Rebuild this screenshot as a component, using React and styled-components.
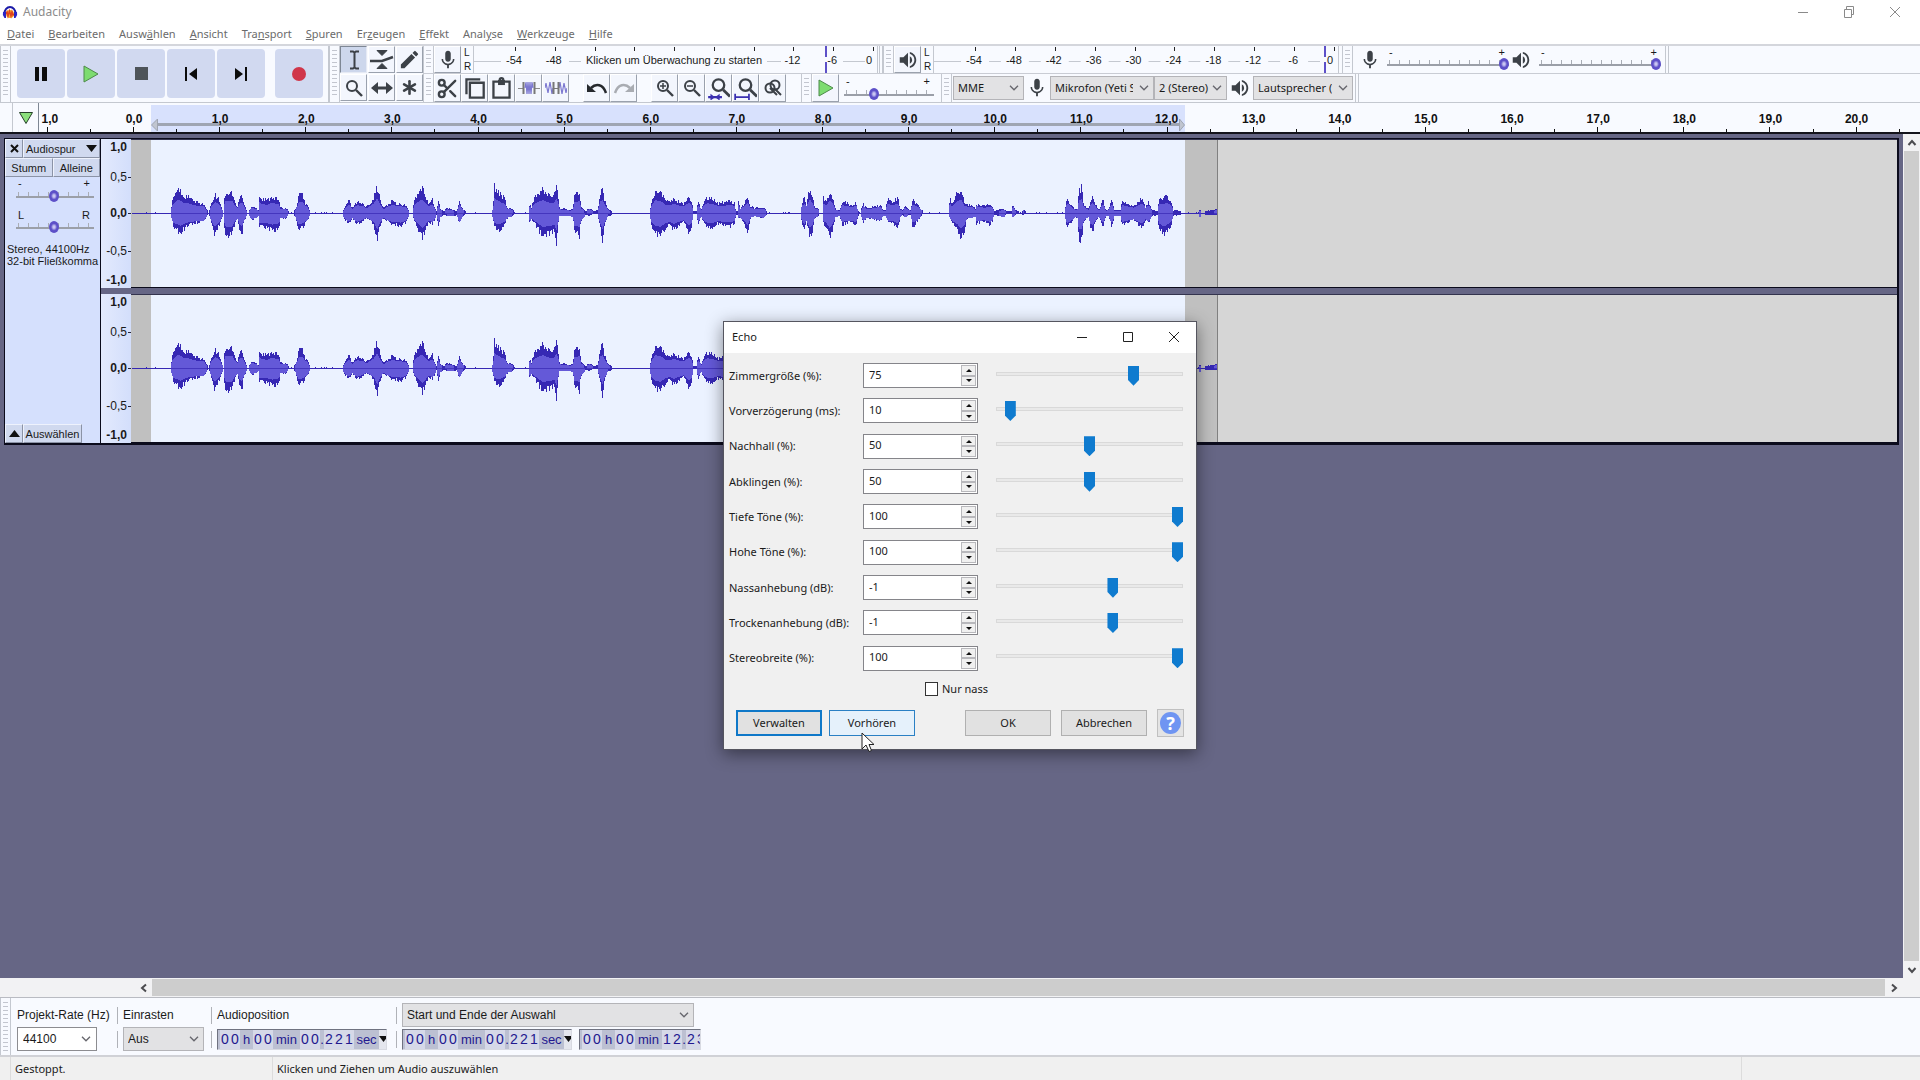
import { useState } from "react";
import styled, { createGlobalStyle, css } from "styled-components";
import { MdMic, MdVolumeUp, MdEdit } from "react-icons/md";
import { Scissors, Asterisk } from "lucide-react";

const GlobalStyle = createGlobalStyle`
  * { box-sizing: border-box; }
  body {
    margin: 0;
    overflow: hidden;
    background: #666685;
    color: #1a1a1a;
    font-family: "Noto Sans", "Segoe UI", sans-serif;
    font-size: 11px;
    line-height: 16px;
  }
  button, input, select {
    font: inherit;
    color: inherit;
    margin: 0;
    padding: 0;
    border: 0;
    border-radius: 0;
    background: none;
  }
  svg { display: block; flex-shrink: 0; }
`;

const arial = css`
  font-family: "Liberation Sans", Arial, sans-serif;
`;

const Window = styled.div`
  display: flex;
  flex-direction: column;
  height: 100vh;
  position: relative;
`;

/* ---------- title + menu ---------- */

const TitleBar = styled.header`
  display: flex;
  align-items: center;
  height: 24px;
  padding: 0 17px 0 2px;
  background: #fff;
  color: #8c8c8c;
`;

const AppTitle = styled.h1`
  flex: 1;
  margin: 0 0 0 5px;
  font-size: 12px;
  font-weight: 400;
`;

const WindowButtons = styled.div`
  display: flex;
  gap: 30px;
`;

const WindowButton = styled.button`
  display: flex;
  justify-content: center;
  width: 16px;
  color: #8a8a8a;
`;

const MenuBar = styled.nav`
  display: flex;
  gap: 14px;
  height: 20px;
  padding: 2px 7px;
  background: #fff;
  color: #6b6b6b;
`;

const MenuButton = styled.button`
  white-space: nowrap;
`;

/* ---------- toolbars ---------- */

const ToolDock = styled.div`
  display: flex;
  height: 59px;
  border-top: 2px solid #d4d6dc;
  border-bottom: 1px solid #c4c8d0;
  background: #f8faff;
`;

const ToolRows = styled.div`
  flex: 1;
  display: grid;
  grid-template-rows: 28px 1fr;
`;

const ToolRow = styled.div`
  display: flex;
  align-items: stretch;
  border-bottom: ${(p) => (p.$last ? "0" : "1px solid #c9ccd4")};
`;

const Grabber = styled.div`
  width: 11px;
  border-left: 1px solid #c4c8d0;
  border-right: 1px solid #c4c8d0;
  padding: 4px 2px;
  &::before {
    content: "";
    display: block;
    height: 100%;
    background: repeating-linear-gradient(#c3c6cf 0 1px, transparent 1px 4px);
  }
`;

const DockEnd = styled.div`
  width: 4px;
  border-left: 1px solid #c4c8d0;
  border-right: 1px solid #c4c8d0;
`;

const Transport = styled.div`
  display: flex;
  gap: 2px;
  padding: 3px 5px 4px 6px;
  border-right: 1px solid #c4c8d0;
`;

const TransportButton = styled.button`
  display: flex;
  align-items: center;
  justify-content: center;
  width: 48px;
  margin-left: ${(p) => (p.$apart ? 8 : 0)}px;
  border-radius: 4px;
  background: #d1d9f0;
`;

const ToolGrid = styled.div`
  display: grid;
  grid-template-columns: repeat(3, 27px);
  grid-template-rows: 27px 27px;
  gap: 1px;
`;

const ToolButton = styled.button`
  display: flex;
  align-items: center;
  justify-content: center;
  width: 27px;
  color: #3c4147;
  background: ${(p) => (p.$on ? "#cdd7ec" : "#f3f6fd")};
  border: 1px solid;
  border-color: ${(p) => (p.$on ? "#7e8794 #e6eaf4 #e6eaf4 #7e8794" : "#fff #9aa1ad #9aa1ad #fff")};
`;

const Spacer = styled.div`
  width: ${(p) => p.$width}px;
`;

const Channels = styled.div`
  ${arial}
  display: flex;
  flex-direction: column;
  justify-content: space-around;
  width: 12px;
  padding-left: 3px;
  font-size: 10px;
  line-height: 13px;
`;

const MeterFrame = styled.button`
  ${arial}
  width: ${(p) => p.$width}px;
  border-left: 1px solid #c4c8d0;
  font-size: 11px;
`;

const ToolIcon = styled.span`
  display: flex;
  align-items: center;
  justify-content: center;
  width: ${(p) => p.$width}px;
  color: #3c4147;
`;

const SliderBox = styled.label`
  ${arial}
  display: flex;
  flex-direction: column;
  width: ${(p) => p.$width}px;
  font-size: 11px;
  line-height: ${(p) => p.$line || 11}px;
`;

const SliderEnds = styled.span`
  display: flex;
  justify-content: space-between;
  padding: 0 4px 0 2px;
`;

const KnobRange = styled.input`
  appearance: none;
  width: 100%;
  height: 12px;
  background:
    linear-gradient(#9b9fa8, #9b9fa8) 0 6px / 100% 2px no-repeat,
    repeating-linear-gradient(90deg, #a9adb5 0 1px, transparent 1px 10px) 2px 2px / 100% 4px no-repeat;
  &::-webkit-slider-thumb {
    appearance: none;
    width: 10px;
    height: 12px;
    border-radius: 50%;
    background: radial-gradient(#c9c6f2 0 1px, #5d50c8 3px 5px);
  }
`;

const SelectWrap = styled.span`
  position: relative;
  display: flex;
  width: ${(p) => p.$width}px;
  height: ${(p) => p.$height || 24}px;
  margin: ${(p) => p.$margin || "0"};
  svg {
    position: absolute;
    right: 5px;
    top: calc(50% - 3px);
    pointer-events: none;
  }
`;

const Select = styled.select`
  ${(p) => p.$arial && arial}
  appearance: none;
  width: 100%;
  padding: 0 ${(p) => (p.$clip ? 20 : 4)}px 0 4px;
  border: 1px solid #b4b4b8;
  background: #e2e2e4;
  font-size: ${(p) => (p.$arial ? 12 : 11)}px;
`;

/* ---------- timeline ---------- */

const Timeline = styled.div`
  display: flex;
  height: 31px;
  border-bottom: 2px solid #14141c;
  background: #f8faff;
`;

const PinButton = styled.button`
  display: flex;
  align-items: center;
  justify-content: center;
  width: 27px;
  margin-left: 12px;
  border-left: 1px solid #c4c8d0;
  border-right: 1px solid #7e8794;
`;

const RulerBox = styled.div`
  ${arial}
  flex: 1;
  overflow: hidden;
  font-size: 12px;
  font-weight: 700;
`;

/* ---------- project area ---------- */

const Project = styled.main`
  flex: 1;
  min-height: 0;
  display: grid;
  grid-template-columns: 1fr 17px;
  grid-template-rows: 1fr 19px;
`;

const TrackArea = styled.section`
  padding: 4px 4px 0 4px;
  overflow: hidden;
  background: #666685;
`;

const Track = styled.article`
  display: flex;
  border: 1px solid #0b0b1c;
  border-width: 1px 2px 2px 1px;
  height: 307px;
`;

const TrackPanel = styled.div`
  ${arial}
  display: flex;
  flex-direction: column;
  width: 96px;
  border-right: 1px solid #0b0b1c;
  background: #d5e0fd;
  font-size: 11px;
  line-height: 12px;
`;

const PanelRow = styled.div`
  display: flex;
  height: 19px;
`;

const PanelButton = styled.button`
  display: flex;
  align-items: center;
  justify-content: ${(p) => (p.$spread ? "space-between" : "center")};
  width: ${(p) => (p.$width ? p.$width + "px" : "auto")};
  flex: ${(p) => (p.$width ? "none" : 1)};
  padding: 0 2px;
  overflow: hidden;
  background: #d0d9ef;
  border: 1px solid;
  border-color: #eef2fd #8b93a6 #8b93a6 #eef2fd;
`;

const PanelSliders = styled.div`
  display: flex;
  flex-direction: column;
  gap: 8px;
  padding: 0 5px 0 11px;
`;

const FormatInfo = styled.p`
  flex: 1;
  margin: 10px 0 0 2px;
  font-size: 11px;
  line-height: 12px;
  white-space: nowrap;
`;

const Lanes = styled.div`
  flex: 1;
  min-width: 0;
  display: grid;
  grid-template-rows: 149px 149px;
  gap: 6px;
`;

const Lane = styled.div`
  display: flex;
  min-width: 0;
`;

const Scale = styled.ul`
  ${arial}
  display: grid;
  grid-template-rows: 16px 44px 28px 48px 9px;
  width: 30px;
  margin: 0;
  padding: 0;
  list-style: none;
  background: linear-gradient(90deg, #e3eafd, #d3defb);
`;

const ScaleMark = styled.li`
  display: flex;
  align-items: center;
  justify-content: flex-end;
  padding-right: ${(p) => (p.$tick ? 0 : 4)}px;
  font-size: 12px;
  font-weight: ${(p) => (p.$bold ? 700 : 400)};
  &::after {
    content: "";
    display: ${(p) => (p.$tick ? "block" : "none")};
    width: 3px;
    height: 1px;
    margin-left: 1px;
    background: #26263a;
  }
`;

const Wave = styled.div`
  flex: 1;
  min-width: 0;
  overflow: hidden;
  border-top: 1px solid #34344e;
  border-bottom: 1px solid #0b0b1c;
  background: #d6d6d6;
`;

const Scroll = styled.div`
  display: flex;
  flex-direction: ${(p) => (p.$vertical ? "column" : "row")};
  padding: ${(p) => (p.$vertical ? "0 1px" : "1px 0 1px 135px")};
  background: #f2f2f4;
`;

const ScrollButton = styled.button`
  display: flex;
  align-items: center;
  justify-content: center;
  width: ${(p) => p.$width || 15}px;
  height: 17px;
  color: #4c4c50;
`;

const ScrollThumb = styled.div`
  flex: 1;
  background: #cdcdcd;
`;

const Corner = styled.div`
  background: #f2f2f4;
`;

/* ---------- bottom bars ---------- */

const SelectionBar = styled.div`
  ${arial}
  display: flex;
  height: 58px;
  border-top: 1px solid #b9bbc2;
  background: #f8faff;
  font-size: 12px;
`;

const SelectionGrid = styled.div`
  display: grid;
  grid-template-columns: 94px 88px 179px auto;
  grid-template-rows: 24px 24px;
  column-gap: 6px;
  padding: 5px 0 0 6px;
`;

const SelectionCell = styled.div`
  display: flex;
  align-items: center;
  gap: 7px;
  white-space: nowrap;
`;

const Divided = styled(SelectionCell)`
  padding-left: 6px;
  background: linear-gradient(#b0b2b8, #b0b2b8) 0 4px / 1px 17px no-repeat;
`;

const ComboWrap = styled(SelectWrap)`
  border: 1px solid #8c8c90;
  background: #fff;
`;

const ComboInput = styled.input`
  width: 100%;
  padding-left: 5px;
  background: none;
`;

const TimeField = styled.div`
  display: flex;
  width: ${(p) => p.$width}px;
  height: 21px;
  padding-left: 2px;
  overflow: hidden;
  border: 1px solid;
  border-color: #6f7280 #d8dae2 #d8dae2 #6f7280;
  background: #bcc0d2;
  color: #23188f;
  font-size: 14px;
  line-height: 19px;
`;

const Digit = styled.span`
  flex: none;
  width: 10px;
  text-align: center;
  background: #d6d9e8;
`;

const Unit = styled.span`
  flex: none;
  width: ${(p) => p.$width}px;
  text-align: center;
  font-size: 13px;
`;

const TimeMenu = styled.button`
  margin-left: auto;
  width: 9px;
  background: #e4e6ee;
  color: #111;
`;

const StatusBar = styled.footer`
  display: flex;
  height: 25px;
  border-top: 2px solid #d0d1d6;
  padding-left: 10px;
  background: #f0f0f0;
  line-height: 23px;
`;

const StatusCell = styled.span`
  width: ${(p) => (p.$width ? p.$width + "px" : "auto")};
  flex: ${(p) => (p.$width ? "none" : 1)};
  padding-left: 4px;
  border-left: 1px solid #dcdcdc;
`;

/* ---------- echo dialog ---------- */

const Dialog = styled.section`
  position: absolute;
  top: 321px;
  left: calc(50% - 237px);
  width: 474px;
  border: 1px solid #55555f;
  background: #f0f0f0;
  box-shadow: 0 4px 16px rgba(0, 0, 0, 0.45);
`;

const DialogTitle = styled.header`
  display: flex;
  align-items: center;
  height: 31px;
  padding: 0 14px 2px 8px;
  background: #fff;
`;

const DialogName = styled.h2`
  flex: 1;
  margin: 0;
  font-size: 11px;
  font-weight: 400;
`;

const DialogButtons = styled(WindowButtons)`
  button { color: #222; }
`;

const Params = styled.div`
  display: grid;
  grid-template-rows: repeat(9, 1fr);
  height: 318px;
  margin-top: 5px;
  padding: 0 12px 0 5px;
`;

const ParamRow = styled.div`
  display: grid;
  grid-template-columns: 134px 115px 1fr;
  align-items: center;
`;

const SpinBox = styled.div`
  display: flex;
  height: 25px;
  padding: 1px;
  border: 1px solid #85858a;
  background: #fff;
`;

const SpinInput = styled.input`
  flex: 1;
  min-width: 0;
  padding: 0 0 2px 4px;
  outline: 0;
`;

const SpinButtons = styled.div`
  display: grid;
  width: 15px;
  grid-template-rows: 1fr 1fr;
`;

const SpinButton = styled.button`
  display: flex;
  align-items: center;
  justify-content: center;
  border: 1px solid #b8b8bc;
  background: #f0f0f0;
`;

const ParamSlider = styled.input`
  appearance: none;
  width: 187px;
  height: 20px;
  margin-left: 18px;
  background:
    linear-gradient(#e9e9e9, #e9e9e9) 1px 7px / 185px 2px no-repeat,
    linear-gradient(#d9d9d9, #d9d9d9) 0 6px / 100% 4px no-repeat;
  &::-webkit-slider-thumb {
    appearance: none;
    width: 11px;
    height: 20px;
    background: #0f7bcf;
    clip-path: polygon(0 0, 100% 0, 100% 72%, 50% 100%, 0 72%);
  }
`;

const CheckLabel = styled.label`
  display: flex;
  align-items: center;
  gap: 4px;
  width: max-content;
  margin: 5px 0 0 201px;
`;

const CheckBox = styled.input`
  appearance: none;
  width: 13px;
  height: 14px;
  border: 1px solid #333;
  background: #fff;
`;

const DialogActions = styled.div`
  display: flex;
  align-items: center;
  gap: 7px;
  padding: 12px;
`;

const Push = styled.button`
  width: 86px;
  height: 26px;
  margin-left: ${(p) => p.$left || 0}px;
  margin-right: ${(p) => p.$right || 0}px;
  border: ${(p) => (p.$focus ? "2px solid #0f78c8" : p.$hover ? "1px solid #2a80c4" : "1px solid #b0b0b0")};
  background: ${(p) => (p.$hover ? "#e5f1fb" : "#e1e1e1")};
`;

const HelpButton = styled.button`
  display: flex;
  align-items: center;
  justify-content: center;
  width: 27px;
  height: 28px;
  margin-left: 3px;
  border: 1px solid #c0c0c0;
  background: #e4e4e4;
`;

const HelpMark = styled.span`
  width: 21px;
  height: 22px;
  border-radius: 50%;
  background: #6f95f2;
  color: #fff;
  font-size: 18px;
  font-weight: 700;
  line-height: 22px;
`;

const Cursor = styled.svg`
  position: absolute;
  left: 137px;
  top: 410px;
`;

/* ---------- data ---------- */

// [before, access key, after]
const menus = [
  ["", "D", "atei"], ["", "B", "earbeiten"], ["Ausw", "ä", "hlen"], ["", "A", "nsicht"],
  ["Tra", "n", "sport"], ["", "S", "puren"], ["Er", "z", "eugen"], ["", "E", "ffekt"],
  ["Anal", "y", "se"], ["", "W", "erkzeuge"], ["", "H", "ilfe"],
];

const params = [
  { id: "room", label: "Zimmergröße (%):", value: 75, min: 0, max: 100 },
  { id: "predelay", label: "Vorverzögerung (ms):", value: 10, min: 0, max: 200 },
  { id: "reverb", label: "Nachhall (%):", value: 50, min: 0, max: 100 },
  { id: "damping", label: "Abklingen (%):", value: 50, min: 0, max: 100 },
  { id: "low", label: "Tiefe Töne (%):", value: 100, min: 0, max: 100 },
  { id: "high", label: "Hohe Töne (%):", value: 100, min: 0, max: 100 },
  { id: "wet", label: "Nassanhebung (dB):", value: -1, min: -20, max: 10 },
  { id: "dry", label: "Trockenanhebung (dB):", value: -1, min: -20, max: 10 },
  { id: "width", label: "Stereobreite (%):", value: 100, min: 0, max: 100 },
];

// peak envelope of the clip: third-pixels from the block start, peak above, peak below
const envelope = [
  { start: 0, points: [
    [395,1,1],[510,1,1],[515,11,8],[520,16,15],[532,24,18],[540,22,21],[550,16,16],[565,16,13],[580,12,11],
    [595,10,9],[610,9,9],[618,4,4],[625,1,1],[632,8,8],[640,16,21],[645,18,21],[655,14,14],[665,4,4],
    [670,1,1],[673,20,21],[680,21,23],[697,20,22],[700,14,14],[707,8,8],[712,6,6],[718,17,19],[725,18,21],
    [730,10,10],[738,3,3],[742,1,1],[755,7,7],[768,5,5],[774,3,3],[776,19,14],[782,14,14],[800,13,15],
    [815,17,18],[830,14,17],[836,13,14],[840,5,5],[857,5,5],[865,2,1],[878,1,1],[885,4,4],[892,12,14],
    [895,19,18],[907,18,15],[915,10,10],[922,7,7],[930,1,1],[1027,1,1],[1030,4,5],[1046,13,11],[1055,5,5],
    [1070,12,12],[1085,10,8],[1098,6,5],[1110,11,8],[1120,16,12],[1130,27,29],[1138,15,15],[1148,5,5],
    [1165,9,9],[1175,13,12],[1190,9,12],[1199,9,13],
  ] },
  { start: 400, points: [
    [0,9,14],[15,8,10],[28,1,1],[36,1,1],[42,13,8],[55,20,18],[65,25,26],[75,17,18],[85,10,8],[95,14,12],
    [105,4,5],[108,2,2],[114,12,12],[120,4,4],[130,2,2],[140,5,3],[160,3,3],[170,2,2],[176,12,12],[187,4,3],
    [200,1,1],[225,1,1],[272,1,1],[278,5,6],[282,27,14],[292,22,18],[305,17,15],[314,14,11],[320,5,5],
    [330,5,4],[345,1,1],[385,1,1],[388,11,12],[393,5,6],[400,14,9],[415,20,17],[428,23,24],[440,19,21],
    [450,17,22],[460,17,18],[464,20,20],[467,28,34],[472,20,14],[477,5,3],[510,3,3],[518,5,4],[522,18,20],
    [537,21,23],[542,6,8],[555,2,2],[568,5,3],[580,2,1],[592,3,2],[600,20,16],[606,24,27],[612,14,14],
    [622,4,3],[635,2,2],[670,1,1],[748,1,1],[752,10,12],[765,23,20],[780,21,23],[795,13,15],[808,12,12],
    [820,15,17],[835,11,12],[850,9,8],[858,14,14],[866,17,20],[874,12,13],[878,2,2],[888,2,1],[893,11,10],
    [903,4,4],[908,10,8],[920,16,14],[935,15,15],[955,10,10],[975,11,13],[990,13,13],[1003,9,10],[1006,2,2],
    [1012,2,2],[1015,16,6],[1018,4,4],[1030,9,9],[1042,17,19],[1050,7,5],[1062,5,3],[1088,6,5],[1100,2,2],
    [1160,1,1],[1200,1,1],[1204,10,9],[1212,15,17],[1218,9,9],[1228,25,24],[1236,17,19],[1243,5,5],
    [1253,5,3],[1258,1,1],[1266,1,1],[1268,15,9],[1278,12,15],[1288,22,26],[1298,14,14],[1305,4,4],
    [1318,3,3],[1325,12,12],[1340,10,10],[1355,7,9],[1366,11,13],[1373,3,3],[1380,1,1],[1388,9,9],
    [1400,5,5],[1439,8,8],
  ] },
  { start: 860, points: [
    [62,8,8],[68,3,3],[75,3,3],[82,16,9],[95,11,9],[112,15,15],[120,4,4],[127,3,2],[133,7,4],[150,3,2],
    [157,14,14],[170,9,9],[187,2,1],[200,1,1],[265,1,1],[268,17,5],[275,8,9],[290,20,17],[302,24,26],
    [312,11,18],[320,8,5],[335,8,5],[345,4,4],[348,9,11],[370,7,8],[390,8,12],[397,7,7],[400,2,2],
    [430,4,4],[440,2,1],[454,2,1],[457,9,5],[465,3,2],[484,1,1],[487,4,3],[495,2,1],[550,1,1],[612,1,1],
    [615,7,6],[620,16,15],[632,8,9],[645,4,4],[651,5,5],[655,22,28],[664,26,27],[670,8,8],[685,4,4],
    [690,12,16],[697,17,20],[705,9,9],[715,3,3],[728,13,14],[736,3,3],[745,4,3],[754,14,14],[762,3,3],
    [780,3,3],[785,12,12],[800,9,9],[820,7,7],[845,15,15],[855,6,7],[865,11,10],[875,3,3],[892,2,2],
    [895,15,15],[910,15,22],[920,17,18],[932,12,12],[938,3,3],[960,2,2],[1010,1,1],[1016,1,1],[1018,5,6],
    [1022,1,1],[1035,2,2],[1060,3,2],[1072,4,2],
  ] },
];

const peaks = envelope.flatMap(({ start, points }) =>
  points.map(([x, up, down]) => [start + x / 3 - 131, up, down])
);

function noise(n) {
  const s = Math.sin(n * 127.1) * 43758.5453;
  return s - Math.floor(s);
}

function rms(v) {
  return v < 3 ? 0 : v < 10 ? v * 0.75 : 7 + (v - 10) * 0.45;
}

// one vertical bar per pixel column
function buildWave() {
  let outer = "";
  let inner = "";
  let i = 0;
  for (let x = 1; x < 1086; x++) {
    while (i < peaks.length - 2 && peaks[i + 1][0] < x) i++;
    const [x0, u0, d0] = peaks[i];
    const [x1, u1, d1] = peaks[i + 1];
    const t = Math.min(1, Math.max(0, (x - x0) / (x1 - x0)));
    const up = u0 + (u1 - u0) * t;
    const down = d0 + (d1 - d0) * t;
    const a = up < 2 ? (noise(x) > 0.9 ? 1 : 0) : up * (0.82 + noise(x) * 0.32);
    const b = down < 2 ? 1 : down * (0.82 + noise(x + 500) * 0.32);
    outer += `M${x} ${74 - Math.round(a)}V${75 + Math.round(b - 1)}`;
    const ra = Math.min(rms(up), a);
    const rb = Math.min(rms(down), b);
    if (ra + rb > 1) inner += `M${x} ${74 - Math.round(ra)}V${75 + Math.round(rb)}`;
  }
  return { outer, inner };
}

const wave = buildWave();

/* ---------- small parts ---------- */

const Chevron = () => (
  <svg width="10" height="6" viewBox="0 0 10 6" fill="none" stroke="#66666c" strokeWidth="1.3">
    <path d="M1 .8 5 4.8 9 .8" />
  </svg>
);

const Arrow = ({ d }) => (
  <svg width="10" height="10" viewBox="0 0 10 10" fill="none" stroke="currentColor" strokeWidth="2">
    <path d={d} />
  </svg>
);

const Minimize = () => (
  <svg width="12" height="12" stroke="currentColor"><path d="M1 6.5h10" /></svg>
);

const Close = () => (
  <svg width="12" height="12" stroke="currentColor"><path d="M1 1 11 11M11 1 1 11" /></svg>
);

const Tri = ({ up, w = 6, h = 3 }) => (
  <svg width={w} height={h} viewBox="0 0 6 3" preserveAspectRatio="none" fill="#111">
    <path d={up ? "M0 3h6L3 0z" : "M0 0h6L3 3z"} />
  </svg>
);

const Icon = ({ size = 20, children }) => (
  <svg width={size} height={size} viewBox="0 0 20 20" fill="none" stroke="currentColor" strokeWidth="2">
    {children}
  </svg>
);

const Lens = ({ x = 8, y = 8 }) => (
  <g>
    <circle cx={x} cy={y} r="5" />
    <path d={`M${x + 4} ${y + 4}l6 6`} strokeWidth="2.4" />
  </g>
);

function TickSlider({ name, width, left = "-", right = "+", value, line }) {
  const [v, setV] = useState(value);
  return (
    <SliderBox $width={width} $line={line}>
      <SliderEnds><span>{left}</span><span>{right}</span></SliderEnds>
      <KnobRange type="range" aria-label={name} value={v} onChange={(e) => setV(e.target.value)} />
    </SliderBox>
  );
}

function DropDown({ name, width, height, margin, options, clip, arialText }) {
  return (
    <SelectWrap $width={width} $height={height} $margin={margin}>
      <Select aria-label={name} $clip={clip} $arial={arialText}>
        {options.map((o) => <option key={o}>{o}</option>)}
      </Select>
      <Chevron />
    </SelectWrap>
  );
}

function Meter({ name, width, first, labels, message, end, peak }) {
  const step = (end - first) / 9;
  return (
    <MeterFrame $width={width} aria-label={name}>
      <svg width={width - 2} height="27" fontSize="11">
        <path d={`M0 15.5H${first - 14}`} stroke="#c4c8d0" />
        {Array.from({ length: 10 }, (_, i) => (
          <path key={i} d={`M${Math.round(first + i * step) + 0.5} 1v4`} stroke="#222" />
        ))}
        {!message && <path d={`M${first + 14} 15.5H${end - 4}`} stroke="#c4c8d0" strokeDasharray={`${step - 28} 28`} />}
        {message && <path d={`M${first + 54} 15.5H${first + 66}M${first + 252} 15.5H${first + 266}M${end - 30} 15.5H${end - 8}`} stroke="#c4c8d0" />}
        {labels.map((l, i) => l !== null && (
          <text key={i} x={i === 9 ? end - 4 : first + i * step - 1} y="18" textAnchor="middle" fill="#1a1a1a">{l}</text>
        ))}
        {message && <text x={first + 159} y="18" textAnchor="middle" fill="#1a1a1a">{message}</text>}
        <path d={`M${peak} 0v11M${peak} 16v11`} stroke="#5d50c8" strokeWidth="2" />
        <path d={`M${end + 4.5} 0v27`} stroke="#c4c8d0" />
      </svg>
    </MeterFrame>
  );
}

function Time({ hours, minutes, seconds, width, menu }) {
  const digits = (s) => s.split("").map((c, i) => <Digit key={i}>{c}</Digit>);
  const [whole, part] = seconds.split(".");
  return (
    <TimeField $width={width}>
      {digits(hours)}<Unit $width={13}>h</Unit>
      {digits(minutes)}<Unit $width={27}>min</Unit>
      {digits(whole)}<Unit $width={4}>.</Unit>
      {digits(part)}
      {menu && <Unit $width={25}>sec</Unit>}
      {menu && <TimeMenu aria-label="Format"><Tri w={9} h={6} /></TimeMenu>}
    </TimeField>
  );
}

function Ruler() {
  const marks = Array.from({ length: 44 }, (_, i) => i / 2 - 1);
  const toX = (t) => 94 + t * 86.13;
  return (
    <svg width="1882" height="29">
      <rect x="112" y="2" width="1034" height="27" fill="#d8e1fd" />
      <path d="M118 21.500H1140" stroke="#9fa5b2" strokeWidth="3" />
      <path d="M118.500 16v12l-6-6zM1140.500 16v12l5-6z" fill="#c0c5d0" stroke="#9fa5b2" />
      {marks.map((t) => (
        <path key={t} d={`M${Math.round(toX(t)) + 0.5} ${Number.isInteger(t) ? 24 : 26}V29`} stroke="#111" />
      ))}
      {marks.filter(Number.isInteger).map((t) => (
        <text key={t} x={toX(t) + (t < 0 ? 3 : t === 12 ? 0 : 1)} y="20" textAnchor="middle" fill="#111">
          {`${Math.abs(t)},0`}
        </text>
      ))}
    </svg>
  );
}

function Channel() {
  return (
    <Lane>
      <Scale>
        <ScaleMark $bold>1,0</ScaleMark>
        <ScaleMark $tick>0,5</ScaleMark>
        <ScaleMark $tick $bold>0,0</ScaleMark>
        <ScaleMark $tick>-0,5</ScaleMark>
        <ScaleMark $bold>-1,0</ScaleMark>
      </Scale>
      <Wave>
        <svg width="1090" height="147" shapeRendering="crispEdges">
          <rect width="1086" height="147" fill="#c0c0c0" />
          <rect x="20" width="1034" height="147" fill="#ebf2ff" />
          <path d={wave.outer} transform="translate(.5 -1)" stroke="#3628b4" />
          <path d={wave.inner} transform="translate(.5 -1)" stroke="#6459d8" />
          <path d="M1 73.5H1086" stroke="#3628b4" strokeOpacity="0.7" />
          <path d="M1086.5 0V147" stroke="#808080" />
        </svg>
      </Wave>
    </Lane>
  );
}

function Param({ param }) {
  const [value, setValue] = useState(param.value);
  const step = (d) => setValue((v) => Math.min(param.max, Math.max(param.min, Number(v) + d)));
  return (
    <ParamRow>
      <label htmlFor={param.id}>{param.label}</label>
      <SpinBox>
        <SpinInput id={param.id} type="text" value={value} onChange={(e) => setValue(e.target.value)} />
        <SpinButtons>
          <SpinButton aria-label="Mehr" onClick={() => step(1)}><Tri up /></SpinButton>
          <SpinButton aria-label="Weniger" onClick={() => step(-1)}><Tri /></SpinButton>
        </SpinButtons>
      </SpinBox>
      <ParamSlider
        type="range"
        aria-label={param.label}
        min={param.min}
        max={param.max}
        value={value}
        onChange={(e) => setValue(e.target.value)}
      />
    </ParamRow>
  );
}

function EchoDialog() {
  return (
    <Dialog role="dialog" aria-label="Echo">
      <DialogTitle>
        <DialogName>Echo</DialogName>
        <DialogButtons>
          <WindowButton aria-label="Minimieren"><Minimize /></WindowButton>
          <WindowButton aria-label="Maximieren">
            <svg width="12" height="12" fill="none" stroke="currentColor"><path d="M1.5 1.5h9v9h-9z" /></svg>
          </WindowButton>
          <WindowButton aria-label="Schließen"><Close /></WindowButton>
        </DialogButtons>
      </DialogTitle>
      <Params>
        {params.map((p) => <Param key={p.id} param={p} />)}
      </Params>
      <CheckLabel>
        <CheckBox type="checkbox" />
        Nur nass
      </CheckLabel>
      <DialogActions>
        <Push $focus>Verwalten</Push>
        <Push $hover>Vorhören</Push>
        <Push $left={43} $right={3}>OK</Push>
        <Push>Abbrechen</Push>
        <HelpButton aria-label="Hilfe"><HelpMark>?</HelpMark></HelpButton>
      </DialogActions>
      <Cursor width="14" height="21" viewBox="0 0 14 21">
        <path d="M1 1v16l4-4 3 6.500 2.500-1L8 12.500h5z" fill="#fff" stroke="#222" />
      </Cursor>
    </Dialog>
  );
}

function Toolbars() {
  return (
    <ToolDock>
      <Grabber />
      <Transport>
        <TransportButton aria-label="Pause">
          <svg width="14" height="16"><path d="M1 1h4v14H1zM8 1h5v14H8z" fill="#0c0c0c" /></svg>
        </TransportButton>
        <TransportButton aria-label="Wiedergabe">
          <svg width="18" height="18"><path d="M2 1v16L16 9z" fill="#7ddc70" stroke="#4d8a4a" /></svg>
        </TransportButton>
        <TransportButton aria-label="Stopp">
          <svg width="13" height="13"><path d="M0 0h13v13H0z" fill="#4e5459" /></svg>
        </TransportButton>
        <TransportButton aria-label="Zum Anfang">
          <svg width="14" height="14"><path d="M1 0h2v14H1zM13 1v12L5 7z" fill="#0c0c0c" /></svg>
        </TransportButton>
        <TransportButton aria-label="Zum Ende">
          <svg width="14" height="14"><path d="M11 0h2v14h-2zM1 1v12l8-6z" fill="#0c0c0c" /></svg>
        </TransportButton>
        <TransportButton aria-label="Aufnahme" $apart>
          <svg width="14" height="14"><circle cx="7" cy="7" r="7" fill="#d0364a" /></svg>
        </TransportButton>
      </Transport>
      <Grabber />
      <ToolGrid>
        <ToolButton aria-label="Auswahl" $on>
          <Icon><path d="M6 1.500h3l1.500 1L12 1.500h3M6 18.500h3l1.500-1 1.500 1h3M10.500 2v16" /></Icon>
        </ToolButton>
        <ToolButton aria-label="Hüllkurve">
          <svg width="25" height="21" fill="#3c4147" stroke="#3c4147">
            <path d="M8 1.500h10l-5 5zM8 19.500h10l-5-5z" />
            <path d="M1 12h12l11-4" fill="none" strokeWidth="2.500" />
          </svg>
        </ToolButton>
        <ToolButton aria-label="Zeichnen"><MdEdit size={23} /></ToolButton>
        <ToolButton aria-label="Zoom"><Icon><Lens /></Icon></ToolButton>
        <ToolButton aria-label="Verschieben">
          <svg width="22" height="14" fill="#3c4147"><path d="M0 7l7-6v4.500h8V1l7 6-7 6V8.500H7V13z" /></svg>
        </ToolButton>
        <ToolButton aria-label="Multi"><Asterisk size={25} strokeWidth={2.5} /></ToolButton>
      </ToolGrid>
      <ToolRows>
        <ToolRow>
          <Grabber />
          <ToolButton aria-label="Aufnahmepegel"><MdMic size={22} /></ToolButton>
          <Channels><span>L</span><span>R</span></Channels>
          <Meter name="Aufnahmepegel" width={406} first={41} end={399} peak={352}
            labels={["-54", "-48", null, null, null, null, null, "-12", "-6", "0"]}
            message="Klicken um Überwachung zu starten" />
          <DockEnd />
          <Grabber />
          <ToolButton aria-label="Wiedergabepegel"><MdVolumeUp size={22} /></ToolButton>
          <Channels><span>L</span><span>R</span></Channels>
          <Meter name="Wiedergabepegel" width={409} first={41} end={400} peak={391}
            labels={["-54", "-48", "-42", "-36", "-30", "-24", "-18", "-12", "-6", "0"]} />
          <Grabber />
          <ToolIcon $width={34}><MdMic size={22} /></ToolIcon>
          <TickSlider name="Aufnahmelautstärke" width={122} value={100} line={12} />
          <ToolIcon $width={24}><MdVolumeUp size={22} /></ToolIcon>
          <Spacer $width={6} />
          <TickSlider name="Wiedergabelautstärke" width={122} value={100} line={12} />
          <Spacer $width={4} />
          <DockEnd />
        </ToolRow>
        <ToolRow $last>
          <Grabber />
          <ToolButton aria-label="Ausschneiden"><Scissors size={23} strokeWidth={2.5} /></ToolButton>
          <ToolButton aria-label="Kopieren">
            <Icon size={23}><path d="M6 5h12v13H6zM3 15V2h12" /></Icon>
          </ToolButton>
          <ToolButton aria-label="Einfügen">
            <Icon size={23}><path d="M3 4h14v14H3z" /><path d="M7 2.500h6V7H7z" fill="currentColor" stroke="none" /><circle cx="10" cy="2.500" r="1.500" /></Icon>
          </ToolButton>
          <ToolButton aria-label="Trimmen">
            <svg width="22" height="16" fill="none" stroke="#7c78d0">
              <path d="M0 8.500h5M17 8.500h5" stroke="#888" /><path d="M5.500 2v12M16.500 2v12" stroke="#777" strokeWidth="2" />
              <path d="M7 8l1-6 1 12 1-12 1 12 1-12 1 12 1-12 1 6" strokeWidth="1.200" />
            </svg>
          </ToolButton>
          <ToolButton aria-label="Stille">
            <svg width="22" height="16" fill="none" stroke="#7c78d0">
              <path d="M0 8l1-5 2 10 2-11 2 12 1-6M14 8l1-6 2 12 2-11 2 10 1-5" strokeWidth="1.200" />
              <path d="M8 8.500h6" stroke="#777" /><path d="M8.500 2v12M13.500 2v12" stroke="#777" strokeWidth="2" />
            </svg>
          </ToolButton>
          <Spacer $width={14} />
          <ToolButton aria-label="Rückgängig">
            <svg width="22" height="14" fill="none" stroke="#26292d" strokeWidth="2.500">
              <path d="M5 7c5-5 12-4 15 5" /><path d="M1 3v8h9z" fill="#26292d" stroke="none" />
            </svg>
          </ToolButton>
          <ToolButton aria-label="Wiederholen">
            <svg width="22" height="14" fill="none" stroke="#a9acb2" strokeWidth="2.500">
              <path d="M17 7c-5-5-12-4-15 5" /><path d="M21 3v8h-9z" fill="#a9acb2" stroke="none" />
            </svg>
          </ToolButton>
          <Spacer $width={14} />
          <ToolButton aria-label="Vergrößern"><Icon><Lens /><path d="M5 8h6M8 5v6" strokeWidth="1.500" /></Icon></ToolButton>
          <ToolButton aria-label="Verkleinern"><Icon><Lens /><path d="M5 8h6" strokeWidth="1.500" /></Icon></ToolButton>
          <ToolButton aria-label="Auswahl einpassen">
            <Icon size={23}><Lens x={10} y={7} /><path d="M1 17.500h12" stroke="#3a2fb0" /><path d="M3 14.500v6l4-3zM11 14.500v6l-4-3z" fill="#3a2fb0" stroke="none" /></Icon>
          </ToolButton>
          <ToolButton aria-label="Projekt einpassen">
            <Icon size={23}><Lens x={10} y={7} /><path d="M1 17.500h12M1 14.500v6M13 14.500v6" stroke="#3a2fb0" strokeWidth="1.500" /></Icon>
          </ToolButton>
          <ToolButton aria-label="Zoom umschalten">
            <Icon><circle cx="12" cy="7" r="4.500" /><circle cx="7" cy="10" r="4.500" /><path d="M12 11l6 6M7 10l7 7" /></Icon>
          </ToolButton>
          <Spacer $width={15} />
          <Grabber />
          <ToolButton aria-label="Mit Geschwindigkeit abspielen">
            <svg width="16" height="18"><path d="M1 1v16l14-8z" fill="#7ddc70" stroke="#4d8a4a" /></svg>
          </ToolButton>
          <Spacer $width={5} />
          <TickSlider name="Geschwindigkeit" width={90} value={31} line={14} />
          <Spacer $width={7} />
          <Grabber />
          <DropDown name="Host" width={71} margin="2px 0 0 1px" options={["MME"]} />
          <ToolIcon $width={26}><MdMic size={22} /></ToolIcon>
          <DropDown name="Aufnahmegerät" width={104} margin="2px 0 0" clip options={["Mikrofon (Yeti Stereo)"]} />
          <DropDown name="Kanäle" width={73} margin="2px 0 0" options={["2 (Stereo)"]} />
          <ToolIcon $width={26}><MdVolumeUp size={22} /></ToolIcon>
          <DropDown name="Wiedergabegerät" width={100} margin="2px 2px 0 0" clip options={["Lautsprecher ("]} />
          <DockEnd />
        </ToolRow>
      </ToolRows>
    </ToolDock>
  );
}

export default function App() {
  const [rate, setRate] = useState("44100");

  return (
    <Window>
      <GlobalStyle />
      <TitleBar>
        <svg width="16" height="16" viewBox="0 0 16 16" fill="none">
          <circle cx="8" cy="10" r="4" fill="#f7b02c" />
          <path d="M4 10l1-2 1 4 1.500-5L9 12l1-4 1 3 1-1" stroke="#e0431f" strokeWidth="1.500" />
          <path d="M2.500 9.500a5.500 6.500 0 0 1 11 0" stroke="#1b1ba8" strokeWidth="2" />
          <path d="M1 8h3v6H2.500Q0 11 1 8zM15 8h-3v6h1.500Q16 11 15 8z" fill="#2a24c4" />
        </svg>
        <AppTitle>Audacity</AppTitle>
        <WindowButtons>
          <WindowButton aria-label="Minimieren"><Minimize /></WindowButton>
          <WindowButton aria-label="Wiederherstellen">
            <svg width="12" height="12" fill="none" stroke="currentColor"><path d="M1.500 3.500h7v8h-7zM3.500 3V.5h7v8H9" /></svg>
          </WindowButton>
          <WindowButton aria-label="Schließen"><Close /></WindowButton>
        </WindowButtons>
      </TitleBar>
      <MenuBar>
        {menus.map(([before, key, after]) => (
          <MenuButton key={before + key + after}>{before}<u>{key}</u>{after}</MenuButton>
        ))}
      </MenuBar>

      <Toolbars />

      <Timeline>
        <PinButton aria-label="Abspielkopf">
          <svg width="16" height="14"><path d="M1.500 1.500h13L8 12.500z" fill="#8be07c" stroke="#26402a" /></svg>
        </PinButton>
        <RulerBox><Ruler /></RulerBox>
      </Timeline>

      <Project>
        <TrackArea>
          <Track>
            <TrackPanel>
              <PanelRow>
                <PanelButton $width={18} aria-label="Spur schließen">
                  <svg width="9" height="9" stroke="#111" strokeWidth="2"><path d="M1 1l7 7M8 1 1 8" /></svg>
                </PanelButton>
                <PanelButton $spread>Audiospur<Tri w={11} h={7} /></PanelButton>
              </PanelRow>
              <PanelRow>
                <PanelButton>Stumm</PanelButton>
                <PanelButton>Alleine</PanelButton>
              </PanelRow>
              <PanelSliders>
                <TickSlider name="Lautstärke" width={78} value={48} line={13} />
                <TickSlider name="Balance" width={78} left="L" right="R" value={48} line={11} />
              </PanelSliders>
              <FormatInfo>Stereo, 44100Hz<br />32-bit Fließkomma</FormatInfo>
              <PanelRow>
                <PanelButton $width={18} aria-label="Einklappen"><Tri up w={11} h={7} /></PanelButton>
                <PanelButton $width={59}>Auswählen</PanelButton>
              </PanelRow>
            </TrackPanel>
            <Lanes>
              <Channel />
              <Channel />
            </Lanes>
          </Track>
        </TrackArea>
        <Scroll $vertical>
          <ScrollButton aria-label="Nach oben"><Arrow d="M1.500 7 5 3l3.500 4" /></ScrollButton>
          <ScrollThumb />
          <ScrollButton aria-label="Nach unten"><Arrow d="M1.500 3 5 7l3.500-4" /></ScrollButton>
        </Scroll>
        <Scroll>
          <ScrollButton $width={17} aria-label="Nach links"><Arrow d="M7 1.500 3 5l4 3.500" /></ScrollButton>
          <ScrollThumb />
          <ScrollButton $width={18} aria-label="Nach rechts"><Arrow d="M3 1.500 7 5 3 8.500" /></ScrollButton>
        </Scroll>
        <Corner />
      </Project>

      <SelectionBar>
        <Grabber />
        <SelectionGrid>
          <SelectionCell>
            <label htmlFor="rate">Projekt-Rate (Hz)</label>
          </SelectionCell>
          <Divided><label htmlFor="snap">Einrasten</label></Divided>
          <Divided>Audioposition</Divided>
          <Divided>
            <DropDown name="Bereich" width={292} arialText options={["Start und Ende der Auswahl"]} />
          </Divided>
          <SelectionCell>
            <ComboWrap $width={80} $height={24}>
              <ComboInput id="rate" value={rate} onChange={(e) => setRate(e.target.value)} />
              <Chevron />
            </ComboWrap>
          </SelectionCell>
          <Divided>
            <SelectWrap $width={81} $height={24}>
              <Select id="snap" $arial><option>Aus</option></Select>
              <Chevron />
            </SelectWrap>
          </Divided>
          <Divided><Time width={170} hours="00" minutes="00" seconds="00.221" menu /></Divided>
          <Divided>
            <Time width={170} hours="00" minutes="00" seconds="00.221" menu />
            <Time width={122} hours="00" minutes="00" seconds="12.23" />
          </Divided>
        </SelectionGrid>
      </SelectionBar>
      <StatusBar>
        <StatusCell $width={262}>Gestoppt.</StatusCell>
        <StatusCell>Klicken und Ziehen um Audio auszuwählen</StatusCell>
        <StatusCell $width={179} />
      </StatusBar>

      <EchoDialog />
    </Window>
  );
}
